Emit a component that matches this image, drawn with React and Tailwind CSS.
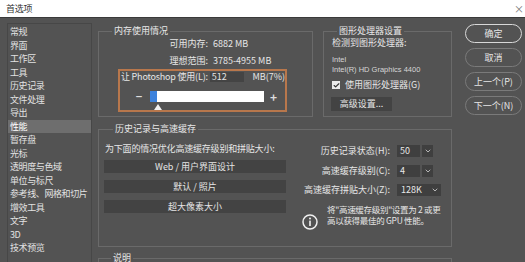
import { Check, ChevronDown } from "lucide-react";

const menu = [
  "常规",
  "界面",
  "工作区",
  "工具",
  "历史记录",
  "文件处理",
  "导出",
  "性能",
  "暂存盘",
  "光标",
  "透明度与色域",
  "单位与标尺",
  "参考线、网格和切片",
  "增效工具",
  "文字",
  "3D",
  "技术预览",
];

const font = {
  fontFamily: '"Noto Sans CJK SC", "Liberation Sans", sans-serif',
};

/* box with a caption sitting on its top border */
function Group({ title, left = "left-[13px]", className = "", children }) {
  return (
    <div className={`relative border border-[#6a6a6a] ${className}`}>
      <span
        className={`absolute ${left} top-[-7px] px-[2px] bg-[#535353] text-[9px] leading-[12px] text-[#e8e8e8]`}
      >
        {title}
      </span>
      {children}
    </div>
  );
}

function Select({ value, split }) {
  if (split) {
    return (
      <div className="flex h-[12px]">
        <div className="w-[23px] bg-[#3f3f3f] pl-[3px] text-[9px] leading-[12px] text-[#e8e8e8]">
          {value}
        </div>
        <div className="ml-[2px] w-[11px] bg-[#3f3f3f] flex items-center justify-center">
          <ChevronDown size={8} strokeWidth={2.5} className="text-[#cfcfcf]" />
        </div>
      </div>
    );
  }
  return (
    <div className="flex h-[12px] w-[44px] items-center bg-[#3f3f3f] pl-[4px] pr-[2px]">
      <span className="flex-1 text-[9px] leading-[12px] text-[#e8e8e8]">{value}</span>
      <ChevronDown size={8} strokeWidth={2.5} className="text-[#cfcfcf]" />
    </div>
  );
}

export default function App() {
  return (
    <div
      className="w-[525px] h-[262px] overflow-hidden bg-[#535353] flex flex-col text-[#e6e6e6]"
      style={font}
    >
      {/* ===== TITLE BAR ===== */}
      <div className="h-[18px] shrink-0 bg-white border-b border-[#3a3a3a] flex items-center justify-between pl-[6px] pr-[1px]">
        <span className="text-[9px] text-[#333] tracking-[-0.3px]">首选项</span>
        <span className="text-[10px] text-[#777] leading-none">×</span>
      </div>

      {/* ===== BODY ===== */}
      <div className="flex pl-[7px] pt-[5px]">
        {/* sidebar */}
        <div className="w-[85px] h-[300px] shrink-0 border border-[#474747] pt-[1.25px]">
          {menu.map((m) => (
            <div
              key={m}
              className={`h-[13.5px] pl-[2px] text-[9px] leading-[13.5px] tracking-[-0.4px] whitespace-nowrap ${
                m === "性能" ? "bg-[#6e6e6e] text-white" : "text-[#e2e2e2]"
              }`}
            >
              {m}
            </div>
          ))}
        </div>

        {/* middle */}
        <div className="ml-[6px] mt-[8px] w-[354px] shrink-0 flex flex-col">
          <div className="flex gap-[10px]">
            {/* memory */}
            <Group title="内存使用情况" className="w-[215px] h-[86px]">
              <div className="pt-[2.5px]">
                <div className="flex text-[9px] leading-[17px]">
                  <span className="w-[109px] text-right">可用内存:</span>
                  <span className="ml-[5px]">6882 MB</span>
                </div>
                <div className="flex text-[9px] leading-[17px]">
                  <span className="w-[109px] text-right">理想范围:</span>
                  <span className="ml-[5px]">3785-4955 MB</span>
                </div>
              </div>
              <div className="ml-[19px] mt-[0.5px] w-[169px] h-[43px] border-2 border-[#b8774c]">
                <div className="flex h-[12px] items-center text-[9px]">
                  <span className="w-[91px] pl-[1px] whitespace-nowrap tracking-[-0.2px]">
                    让 Photoshop 使用(L):
                  </span>
                  <div className="w-[35px] h-[10px] bg-[#444] pl-[2px] text-[9px] leading-[10px]">
                    512
                  </div>
                  <span className="ml-[8px]">MB(7%)</span>
                </div>
                <div className="relative mt-[8px] flex items-center">
                  <span className="ml-[14px] w-[10px] text-center text-[11px] leading-[11px] font-bold text-[#ddd]">
                    −
                  </span>
                  <div className="relative ml-[6px] w-[114px] h-[11px] bg-white">
                    <div className="w-[7px] h-full bg-[#3d82dc]" />
                    <svg
                      className="absolute left-[4px] top-[13px]"
                      width="8"
                      height="6"
                      viewBox="0 0 8 6"
                    >
                      <path d="M4 0 L8 6 L0 6 Z" fill="#f2f2f2" />
                    </svg>
                  </div>
                  <span className="ml-[5px] w-[9px] text-center text-[12px] leading-[11px] font-bold text-[#ddd]">
                    +
                  </span>
                </div>
              </div>
            </Group>

            {/* gpu */}
            <Group title="图形处理器设置" className="w-[129px] h-[86px]">
              <div className="pl-[8px] pt-[5px]">
                <div className="text-[9px] leading-[12px]">检测到图形处理器:</div>
                <div
                  className="mt-[6px] text-[7.5px] leading-[10px] text-[#d6d6d6]"
                  style={{ fontFamily: '"Liberation Sans", sans-serif' }}
                >
                  Intel
                </div>
                <div
                  className="text-[7.5px] leading-[10px] text-[#d6d6d6] whitespace-nowrap"
                  style={{ fontFamily: '"Liberation Sans", sans-serif' }}
                >
                  Intel(R) HD Graphics 4400
                </div>
                <div className="mt-[3px] h-[14px] flex items-center">
                  <div className="w-[8px] h-[8px] bg-[#eaeaea] flex items-center justify-center">
                    <Check size={7} strokeWidth={4} className="text-[#333]" />
                  </div>
                  <span className="ml-[5px] text-[9px]">使用图形处理器(G)</span>
                </div>
                <div className="mt-[5px] ml-[-1px] w-[61px] h-[14px] bg-[#434343] text-center text-[9px] leading-[14px]">
                  高级设置...
                </div>
              </div>
            </Group>
          </div>

          {/* history */}
          <Group
            title="历史记录与高速缓存"
            left="left-[14px]"
            className="mt-[12px] w-[354px] h-[118px]"
          >
            <div className="flex">
              <div className="w-[188px] pl-[5px] pt-[13px]">
                <div className="ml-[1px] text-[9px] leading-[12px] whitespace-nowrap tracking-[-0.2px]">
                  为下面的情况优化高速缓存级别和拼贴大小:
                </div>
                <div className="mt-[5px] flex flex-col gap-[7px]">
                  {["Web / 用户界面设计", "默认 / 照片", "超大像素大小"].map((b) => (
                    <div
                      key={b}
                      className="w-[182px] h-[13px] bg-[#434343] text-center text-[9px] leading-[13px]"
                    >
                      {b}
                    </div>
                  ))}
                </div>
              </div>

              <div className="flex-1 pt-[15px]">
                <div className="flex items-center h-[12px]">
                  <span className="w-[103px] text-right text-[9px]">历史记录状态(H):</span>
                  <div className="ml-[7px]">
                    <Select value="50" split />
                  </div>
                </div>
                <div className="mt-[8px] flex items-center h-[12px]">
                  <span className="w-[103px] text-right text-[9px]">高速缓存级别(C):</span>
                  <div className="ml-[7px]">
                    <Select value="4" split />
                  </div>
                </div>
                <div className="mt-[7px] flex items-center h-[12px]">
                  <span className="w-[103px] text-right text-[9px] whitespace-nowrap">
                    高速缓存拼贴大小(Z):
                  </span>
                  <div className="ml-[7px]">
                    <Select value="128K" />
                  </div>
                </div>
                <div className="mt-[8px] flex items-start">
                  <svg
                    className="ml-[15px] mt-[9.5px] shrink-0"
                    width="16"
                    height="16"
                    viewBox="0 0 16 16"
                  >
                    <circle cx="8" cy="8" r="7" fill="none" stroke="#f0f0f0" strokeWidth="1.5" />
                    <circle cx="8" cy="4.6" r="1" fill="#f0f0f0" />
                    <rect x="7.2" y="6.6" width="1.6" height="5.4" fill="#f0f0f0" />
                  </svg>
                  <div className="ml-[9px] text-[8.5px] leading-[11px] whitespace-nowrap tracking-[-0.3px]">
                    将"高速缓存级别"设置为 2 或更
                    <br />
                    高以获得最佳的 GPU 性能。
                  </div>
                </div>
              </div>
            </div>
          </Group>

          {/* description */}
          <Group title="说明" left="left-[12px]" className="mt-[11px] w-[354px] h-[40px]" />
        </div>

        {/* buttons */}
        <div className="ml-[13px] mt-[1px] w-[57px] shrink-0 flex flex-col gap-[5px]">
          {["确定", "取消", "上一个(P)", "下一个(N)"].map((b, i) => (
            <div
              key={b}
              className={`h-[19px] rounded-full border text-center text-[9px] leading-[17px] ${
                i === 0 ? "border-[#d8d8d8]" : "border-[#7a7a7a]"
              }`}
            >
              {b}
            </div>
          ))}
        </div>
      </div>
    </div>
  );
}
